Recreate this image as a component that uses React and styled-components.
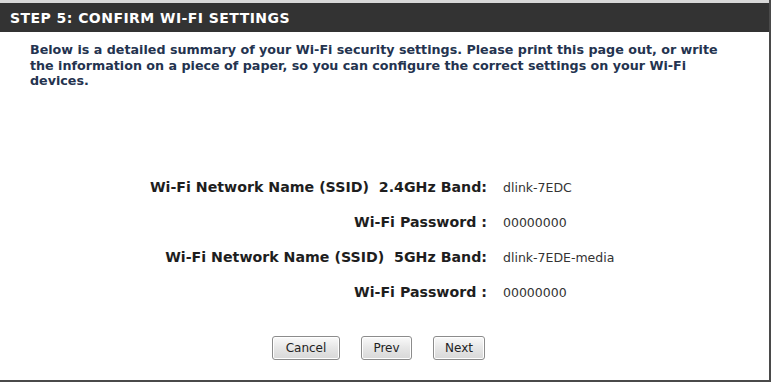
import styled, { createGlobalStyle } from "styled-components";

const GlobalStyle = createGlobalStyle`
  html, body {
    margin: 0;
    padding: 0;
    background: #ffffff;
  }
  body {
    font-family: "DejaVu Sans", Verdana, sans-serif;
  }
`;

const rows = [
  { label: "Wi-Fi Network Name (SSID)\u00a0\u00a02.4GHz Band:", value: "dlink-7EDC" },
  { label: "Wi-Fi Password :", value: "00000000" },
  { label: "Wi-Fi Network Name (SSID)\u00a0\u00a05GHz Band:", value: "dlink-7EDE-media" },
  { label: "Wi-Fi Password :", value: "00000000" },
];

function App() {
  return (
    <>
      <GlobalStyle />
      <LPage>
        <CHeader>STEP 5: CONFIRM WI-FI SETTINGS</CHeader>
        <CIntro>
          Below is a detailed summary of your Wi-Fi security settings. Please print this page out, or write
          <br />
          the information on a piece of paper, so you can configure the correct settings on your Wi-Fi
          <br />
          devices.
        </CIntro>
        <CSummary>
          {rows.map((row, i) => (
            <CRow key={i}>
              <CLabel>{row.label}</CLabel>
              <CValue>{row.value}</CValue>
            </CRow>
          ))}
        </CSummary>
        <CButtons>
          <CButton $w={68}>Cancel</CButton>
          <CButton $w={51}>Prev</CButton>
          <CButton $w={52}>Next</CButton>
        </CButtons>
      </LPage>
    </>
  );
}

export default App;

const LPage = styled.div`
  width: 769px;
  height: 377px;
  padding-top: 3px;
  background: #fff;
  border-right: 2px solid #4a4a4a;
  border-bottom: 2px solid #4a4a4a;
  box-shadow: inset 0 3px 0 #d8d8d8;
  display: flex;
  flex-direction: column;
`;

const CHeader = styled.div`
  height: 29px;
  background: #333333;
  color: #ffffff;
  font-weight: bold;
  font-size: 14px;
  line-height: 30px;
  padding-left: 10px;
  letter-spacing: 0.45px;
`;

const CIntro = styled.p`
  margin: 10px 0 0 30px;
  font-weight: bold;
  font-size: 12.7px;
  line-height: 15.5px;
  white-space: nowrap;
  color: #24334f;
`;

const CSummary = styled.div`
  margin-top: 81px;
  display: flex;
  flex-direction: column;
`;

const CRow = styled.div`
  display: grid;
  grid-template-columns: 487px 1fr;
  column-gap: 16px;
  height: 35px;
  align-items: center;
`;

const CLabel = styled.div`
  text-align: right;
  font-weight: bold;
  font-size: 14.2px;
  color: #1e1e1e;
`;

const CValue = styled.div`
  font-size: 12.5px;
  color: #333333;
`;

const CButtons = styled.div`
  margin-top: 26px;
  display: flex;
  justify-content: center;
  gap: 21px;
  padding-right: 12px;
`;

const CButton = styled.button`
  width: ${(p) => p.$w}px;
  height: 24px;
  padding: 0;
  font-family: "DejaVu Sans", Verdana, sans-serif;
  font-size: 12px;
  color: #222;
  background: linear-gradient(#fafafa, #e6e6e6 50%, #d8d8d8);
  border: 1px solid #8c8c8c;
  border-radius: 3px;
  box-shadow: inset 0 0 0 1px #ffffff;
`;
